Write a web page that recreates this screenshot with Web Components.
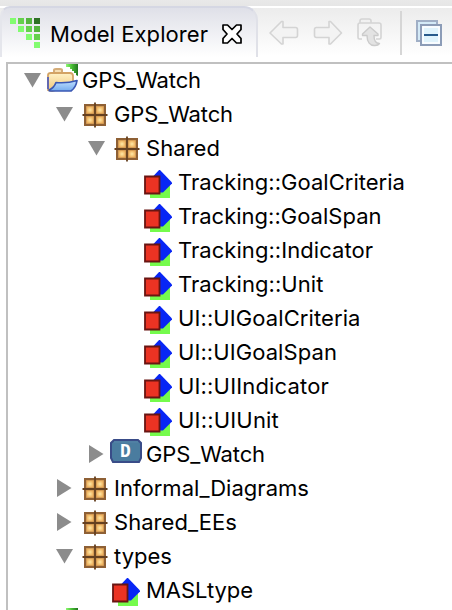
<!DOCTYPE html>
<html lang="en">
<head>
<meta charset="utf-8">
<title>Model Explorer</title>
<style>
html,body{margin:0;height:100%;overflow:hidden;background:#fff}
body{font-family:Inter,"Liberation Sans",sans-serif;font-size:22px;color:#000}
</style>
</head>
<body>
<model-explorer></model-explorer>
<script>
/* The logo's rows: first column, then the colour of each square. */
const LOGO = [
  [0,'#82fc70','#64d04c','#54b43e','#2e7024'],
  [1,'#82fc70','#64d04c','#54b43e'],
  [2,'#82fc70','#64d04c'],
  [3,'#82fc70']
];
/* name: [width, height, markup] */
const ICONS = {
  down: [17,15,'<path d="M0 0h17L8.5 14.5z" fill="#8c8c8c"/>'],
  right: [15,18,'<path d="M0 0v18L14.5 9z" fill="#8c8c8c"/>'],
  logo: [30,30, LOGO.map(([s,...c],y)=>c.map((f,i)=>`<rect x="${(s+i)*8}" y="${y*8}" width="6" height="6" fill="${f}"/>`).join('')).join('')],
  close: [20,20,'<path d="M1 1h4.500L10 5.500 14.500 1H19v4.500L15 10l4 4.500V19h-4.500L10 14.500 5.500 19H1v-4.500L5 10 1 5.500z" fill="#fff" stroke="#000" stroke-width="1.700" stroke-linejoin="round"/>'],
  back: [30,26,'<path d="M1 13 12.500 1.500h1.500v6h12.500q2 0 2 2v6q0 2-2 2H14v6.500h-1.500z" fill="#f3f3f3" stroke="#d4d4d4" stroke-width="1.600" stroke-linejoin="round"/>'],
  forward: [30,26,'<path d="M28.500 13 17.500 1.500H16v6H3.500q-2 0-2 2v6q0 2 2 2H16v6.500h1.500z" fill="#f3f3f3" stroke="#d4d4d4" stroke-width="1.600" stroke-linejoin="round"/>'],
  up: [26,30,'<path d="M5 21H2.500Q1 21 1 19.500V7q0-2 2-2V3q0-2 2-2h7q2 0 2 2v2h8q2 0 2 2v12.500q0 1.500-1.500 1.500H19M3 5h11" fill="none" stroke="#d4d4d4" stroke-width="1.600"/><path d="M13 9 5.500 16v1.500H10C10 24 13 28 18 27.500c2 0 3.500-.5 4.500-2-3.500 0-5.500-3-5.500-8h4V16z" fill="#e3e3e3" stroke="#cbcbcb" stroke-width="1.400" stroke-linejoin="round"/>'],
  collapse: [28,28,'<path d="M1 1h20v20H1z" fill="#d4eaf7" stroke="#a0afc6" stroke-width="2"/><path d="M5 5h20v20H5z" fill="#e0f3fc" stroke="#8c9cb7" stroke-width="2"/><path d="M7 7h16v16H7z" fill="none" stroke="#fff" stroke-width="1.500"/><path d="M8 15h14" stroke="#285a8c" stroke-width="2"/>'],
  project: [32,32,'<defs><linearGradient id="g"><stop stop-color="#8dfa72"/><stop offset=".5" stop-color="#46bb32"/><stop offset="1" stop-color="#227420"/></linearGradient><linearGradient id="b" x2="0" y2="1"><stop stop-color="#c0e0ff"/><stop offset="1" stop-color="#75acee"/></linearGradient><linearGradient id="y" x2="0" y2="1"><stop stop-color="#fff2c7"/><stop offset="1" stop-color="#f0c579"/></linearGradient></defs><path d="M8 8V6q0-1 2-1h4q2 0 2 1v2" fill="#f6dfb4" stroke="#d4ac78" stroke-width="2"/><path d="M2 26V11q0-2 3-2h19q3 0 3 3v9L6 27z" fill="url(#y)" stroke="#d3a365" stroke-width="1.800"/><path d="M2 25V13" stroke="#6268b1" stroke-width="2"/><path d="M3 26Q8 24 10 18.500q11 1 21-2-1 7-6 10.500H4.500Q3 27 3 26z" fill="url(#b)" stroke="#3a58b4" stroke-width="1.700" stroke-linejoin="round"/><path d="M20 0h12v12l-2-1V9h-2V7h-2V5h-2V3h-4z" fill="url(#g)"/>'],
  pkg: [26,26,'<defs><radialGradient id="p"><stop stop-color="#ffe9a6"/><stop offset="1" stop-color="#eeb15f"/></radialGradient></defs><path d="M3 3h20v20H3z" fill="#c08a4c" stroke="#8e6035" stroke-width="2"/><path d="M4.500 4.500h7v7h-7z" fill="url(#p)"/><path d="M14.500 4.500h7v7h-7z" fill="url(#p)"/><path d="M4.500 14.500h7v7h-7z" fill="url(#p)"/><path d="M14.500 14.500h7v7h-7z" fill="url(#p)"/><path d="M13 .5v25M.5 13h25" stroke="#654020" stroke-width="1.800"/>'],
  type: [28,28,'<path d="M6 10h20v18H6z" fill="#75fb4c"/><path d="M15.500-.5 28.500 13 19 22.500h-6L9 6.500z" fill="#0826f5"/><path d="M1 6.500h14.500v17H1z" fill="#eb3323" stroke="#681512" stroke-width="1.800"/>'],
  domain: [32,24,'<path d="M4 1h24l3 3v15l-2 4H3l-2-4V4z" fill="#4a7c9f" stroke="#394c88" stroke-width="2"/><path d="M4 3h24" stroke="#5080a4" stroke-width="2"/><text x="15.500" y="17.500" text-anchor="middle" font-family="DejaVu Sans Mono" font-weight="bold" font-size="18" fill="#fff">D</text>']
};

class ExplorerIcon extends HTMLElement {
  connectedCallback() {
    const [w,h,body] = ICONS[this.getAttribute('name')];
    this.attachShadow({mode:'open'}).innerHTML =
      `<style>:host{display:block;flex:none;width:${w}px;height:${h}px}svg{display:block}</style><svg width="${w}" height="${h}" viewBox="0 0 ${w} ${h}">${body}</svg>`;
  }
}
customElements.define('explorer-icon', ExplorerIcon);

/* A one-line label whose tracking is adjusted to its nominal width. */
class FittedLabel extends HTMLElement {
  connectedCallback() {
    this.attachShadow({mode:'open'}).innerHTML =
      '<style>:host{display:block;white-space:pre;line-height:34px;flex:none}span{display:inline-block}</style><span></span>';
    const s = this.shadowRoot.querySelector('span'), t = this.getAttribute('text');
    s.textContent = t;
    const want = +this.getAttribute('fit');
    if (want) s.style.letterSpacing = (want - s.getBoundingClientRect().width) / t.length + 'px';
  }
}
customElements.define('fitted-label', FittedLabel);

class TreeRow extends HTMLElement {
  connectedCallback() {
    const a = n => this.getAttribute(n), level = +a('level'), open = a('open'), icon = a('icon');
    this.attachShadow({mode:'open'}).innerHTML = `<style>
      :host{display:flex;height:34px;align-items:center;padding-left:${13 + level*32}px;box-sizing:border-box}
      .arrow,.icon{display:flex;align-items:center;justify-content:center;flex:none}
      .arrow{width:22px;height:34px;box-sizing:border-box;padding-bottom:2px}
      .icon{width:36px;height:34px;margin:0 2px 0 1px}
      .icon{box-sizing:border-box;padding-top:${icon==='type'?2:0}px;padding-bottom:${icon==='domain'?9:icon==='project'?2:0}px;padding-left:${icon==='pkg'?1:0}px;padding-right:${icon==='type'?1:0}px}
      fitted-label{padding-bottom:2px}
    </style><div class="arrow">${open ? `<explorer-icon name="${open}"></explorer-icon>` : ''}</div>
    <div class="icon"><explorer-icon name="${icon}"></explorer-icon></div>
    <fitted-label text="${a('label')}" fit="${a('fit')}"></fitted-label>`;
  }
}
customElements.define('tree-row', TreeRow);

class ViewTabs extends HTMLElement {
  connectedCallback() {
    this.attachShadow({mode:'open'}).innerHTML = `<style>
      :host{display:flex;height:62px;background:linear-gradient(#e9e9e9 0,#e6e6e6 6px,#fff 6px,#fff 8px,#ececec 8px,#fff 56px);box-sizing:border-box;padding-top:6px}
      .tab{box-sizing:border-box;width:258px;height:51px;border:2px solid #d5d7e3;border-bottom:0;border-left-color:#e5e6ec;border-right-color:#e0e1e8;border-radius:10px 14px 0 0;background:linear-gradient(#dfe0e8,#fff);display:flex;align-items:center;padding:1px 0 0 8px}
      .logo{margin-right:10px}
      fitted-label{padding-top:2px}
      .close{margin-left:14px;margin-top:2px}
      .tools{display:flex;align-items:center;padding:2px 0 0 11px;box-sizing:border-box;height:51px}
      .fwd{margin-left:14px}.up{margin-left:14px}
      .rule{width:2px;height:44px;background:#d6d6d6;margin:0 14px 0 17px;flex:none}
      .collapse{margin-top:2px}
    </style>
    <div class="tab"><explorer-icon class="logo" name="logo"></explorer-icon><fitted-label text="Model Explorer" fit="158"></fitted-label><explorer-icon class="close" name="close"></explorer-icon></div>
    <div class="tools"><explorer-icon name="back"></explorer-icon><explorer-icon class="fwd" name="forward"></explorer-icon><explorer-icon class="up" name="up"></explorer-icon><div class="rule"></div><explorer-icon class="collapse" name="collapse"></explorer-icon></div>`;
  }
}
customElements.define('view-tabs', ViewTabs);

const ROWS = [
  [0,'down','project','GPS_Watch',119],
  [1,'down','pkg','GPS_Watch',119],
  [2,'down','pkg','Shared',74],
  [3,'','type','Tracking::GoalCriteria',227],
  [3,'','type','Tracking::GoalSpan',203.5],
  [3,'','type','Tracking::Indicator',195],
  [3,'','type','Tracking::Unit',145.5],
  [3,'','type','UI::UIGoalCriteria',182.5],
  [3,'','type','UI::UIGoalSpan',159],
  [3,'','type','UI::UIIndicator',151],
  [3,'','type','UI::UIUnit',101],
  [2,'right','domain','GPS_Watch',119],
  [1,'right','pkg','Informal_Diagrams',195],
  [1,'right','pkg','Shared_EEs',123],
  [1,'down','pkg','types',58],
  [2,'','type','MASLtype',107],
  [0,'','project','',0]
];
class ModelExplorer extends HTMLElement {
  connectedCallback() {
    this.attachShadow({mode:'open'}).innerHTML = `<style>
      :host{display:flex;flex-direction:column;height:610px;overflow:hidden}
      view-tabs{flex:none}
      .tree{flex:1;min-height:0;overflow:hidden;margin-left:6px;border-left:2px solid #c0c0c0;border-top:2px solid #c0c0c0;background:#fff}
    </style><view-tabs></view-tabs><div class="tree">${ROWS.map(([l,o,i,t,f]) =>
      `<tree-row level="${l}" open="${o}" icon="${i}" label="${t}" fit="${f}"></tree-row>`).join('')}</div>`;
  }
}
customElements.define('model-explorer', ModelExplorer);
</script>
</body>
</html>
